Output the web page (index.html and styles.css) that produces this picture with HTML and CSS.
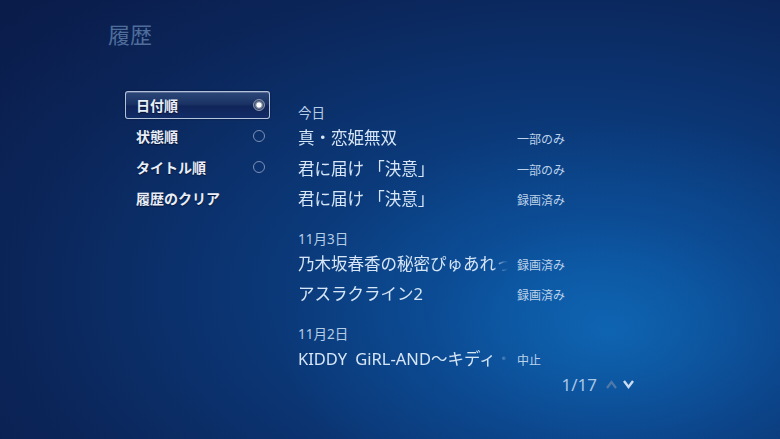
FILE: index.html
```html
<!DOCTYPE html>
<html lang="ja">
<head>
    <meta charset="UTF-8">
    <meta name="viewport" content="width=device-width, initial-scale=1.0">
    <title>履歴</title>
    <link rel="stylesheet" href="styles.css">
</head>
<body>
    <div class="screen">
        <h1 class="page-title">履歴</h1>

        <div class="main">
            <ul class="menu">
                <li class="menu-item selected">
                    <span>日付順</span>
                    <span class="radio checked"></span>
                </li>
                <li class="menu-item">
                    <span>状態順</span>
                    <span class="radio"></span>
                </li>
                <li class="menu-item">
                    <span>タイトル順</span>
                    <span class="radio"></span>
                </li>
                <li class="menu-item">
                    <span>履歴のクリア</span>
                </li>
            </ul>

            <div class="history">
                <div class="group">
                    <div class="group-date">今日</div>
                    <div class="row">
                        <span class="row-title">真・恋姫無双</span>
                        <span class="row-status">一部のみ</span>
                    </div>
                    <div class="row">
                        <span class="row-title">君に届け 「決意」</span>
                        <span class="row-status">一部のみ</span>
                    </div>
                    <div class="row">
                        <span class="row-title">君に届け 「決意」</span>
                        <span class="row-status">録画済み</span>
                    </div>
                </div>

                <div class="group">
                    <div class="group-date">11月3日</div>
                    <div class="row">
                        <span class="row-title">乃木坂春香の秘密ぴゅあれっつぁ♪</span>
                        <span class="row-status">録画済み</span>
                    </div>
                    <div class="row">
                        <span class="row-title">アスラクライン2</span>
                        <span class="row-status">録画済み</span>
                    </div>
                </div>

                <div class="group">
                    <div class="group-date">11月2日</div>
                    <div class="row">
                        <span class="row-title">KIDDY&ensp;GiRL-AND～キディ・ガーランド～</span>
                        <span class="row-status">中止</span>
                    </div>
                </div>

                <div class="pager">
                    <span class="pager-count">1/17</span>
                    <svg class="pager-arrow up" width="11" height="9" viewBox="0 0 11 9">
                        <path d="M1 8 L5.5 2 L10 8" fill="none" stroke="currentColor" stroke-width="2.2"/>
                    </svg>
                    <svg class="pager-arrow down" width="11" height="9" viewBox="0 0 11 9">
                        <path d="M1 1 L5.5 7 L10 1" fill="none" stroke="currentColor" stroke-width="2.4"/>
                    </svg>
                </div>
            </div>
        </div>
    </div>
</body>
</html>
```

FILE: styles.css
```css
html, body {
    margin: 0;
    padding: 0;
    width: 780px;
    height: 439px;
    overflow: hidden;
}
body {
    font-family: "Noto Sans", "Noto Sans CJK JP", sans-serif;
    background-color: #0a1d4c;
    background-image:
        radial-gradient(ellipse 330px 210px at 610px 330px, rgba(16, 110, 190, 0.75), rgba(14, 92, 172, 0.35) 55%, rgba(12, 60, 130, 0) 100%),
        radial-gradient(ellipse 740px 420px at 570px 290px, #0a4b93 0%, #0b3776 42%, #0b2559 75%, #0a1c4a 100%);
}
.screen {
    width: 780px;
    height: 439px;
}
.page-title {
    margin: 0;
    padding: 20px 0 0 108px;
    font-family: "Noto Sans CJK JP", sans-serif;
    font-size: 22px;
    line-height: 26px;
    font-weight: normal;
    color: #4f6d9b;
}
.main {
    display: flex;
    margin-top: 45px;
    padding-left: 125px;
}

/* left menu */
.menu {
    list-style: none;
    margin: 0;
    padding: 0;
    width: 145px;
    display: flex;
    flex-direction: column;
    gap: 3px;
}
.menu-item {
    box-sizing: border-box;
    height: 28px;
    display: flex;
    align-items: center;
    justify-content: space-between;
    padding: 0 4px 0 10px;
    font-size: 14px;
    font-weight: bold;
    color: #e9eff8;
    text-shadow: 0 1px 1px rgba(0, 0, 20, 0.6);
    border: 1px solid transparent;
    border-radius: 3px;
}
.menu-item.selected {
    border-color: rgba(196, 210, 232, 0.9);
    background: linear-gradient(#2c4679 0%, #1b3465 45%, #10255a 55%, #122c66 100%);
    box-shadow: inset 0 1px 0 rgba(255, 255, 255, 0.22), 0 0 2px rgba(0, 0, 20, 0.6);
}
.radio {
    box-sizing: border-box;
    width: 12px;
    height: 12px;
    border: 1px solid #7d90b6;
    border-radius: 50%;
}
.radio.checked {
    border-color: #8e9ab0;
    background: radial-gradient(circle at 50% 50%, #ffffff 0 2.2px, #9aa6bb 2.8px, #3a4a6a 4.5px, #56657f 6px);
}

/* history list */
.history {
    width: 338px;
    margin-left: 28px;
    padding-top: 13px;
}
.group + .group {
    margin-top: 15px;
}
.group-date {
    height: 19px;
    line-height: 19px;
    font-size: 13.5px;
    color: #b6cde6;
}
.row {
    display: flex;
    align-items: baseline;
    height: 30.5px;
}
.row-title {
    width: 212px;
    margin-right: 7px;
    flex-shrink: 0;
    line-height: 30.5px;
    font-size: 16.5px;
    color: #d6e6f6;
    white-space: nowrap;
    overflow: hidden;
    -webkit-mask-image: linear-gradient(to right, #000 194px, transparent 210px);
    mask-image: linear-gradient(to right, #000 194px, transparent 210px);
}
.row-status {
    font-size: 12px;
    color: #bcd2ea;
}
.pager {
    display: flex;
    align-items: center;
    justify-content: flex-end;
    height: 20px;
    padding-right: 2px;
}
.pager-count {
    font-size: 17px;
    color: #a9c6e6;
    margin-right: 9px;
}
.pager-arrow.up {
    color: #5079aa;
    margin-right: 6px;
}
.pager-arrow.down {
    color: #cadcf0;
}
```
